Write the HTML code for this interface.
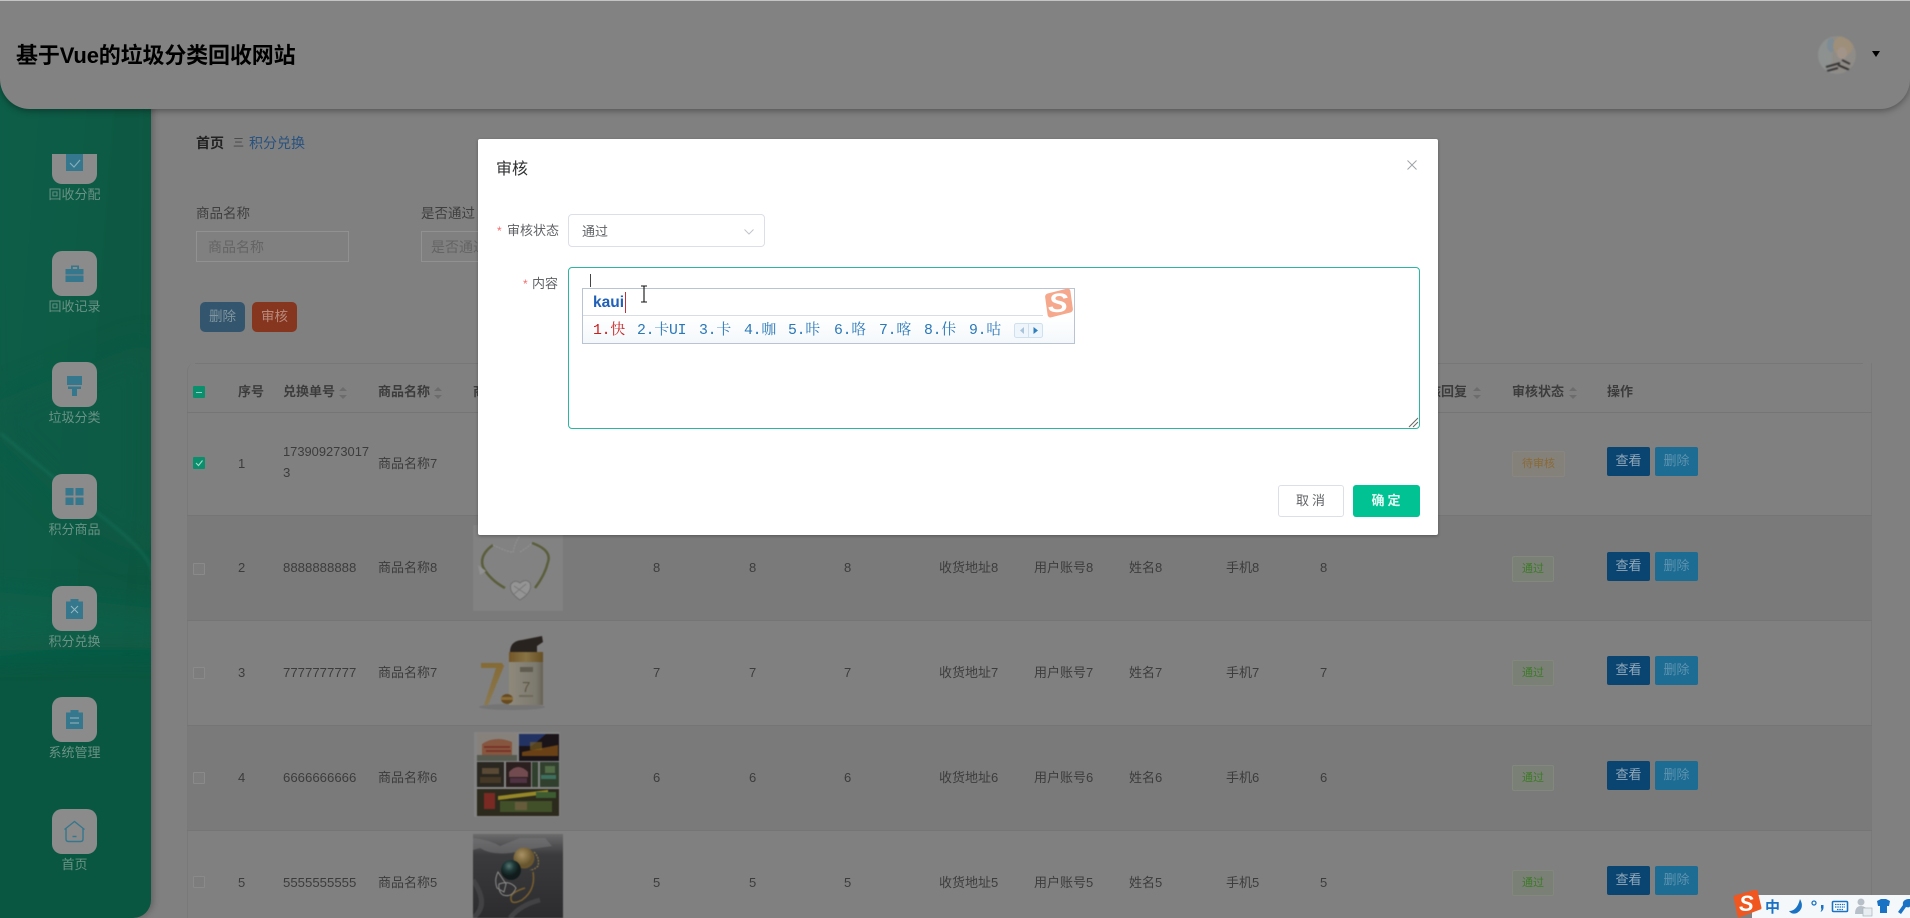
<!DOCTYPE html>
<html lang="zh-CN"><head><meta charset="utf-8"><title>基于Vue的垃圾分类回收网站</title>
<style>
html,body{margin:0;padding:0;width:1910px;height:918px;overflow:hidden;background:#808080}
body{position:relative;font-family:"Liberation Sans","Noto Sans CJK SC",sans-serif;color:#3c3c3c}
.a,.t{position:absolute}
.t{white-space:nowrap;font-size:13px;line-height:14px}
.b{font-weight:700;color:#3c3c3c}
.tile{position:absolute;left:52px;width:45px;height:45px;border-radius:10px;background:#8b8b8b}
.lb{position:absolute;left:0;width:149px;text-align:center;font-size:13px;line-height:14px;color:#6a9285}
.cb{position:absolute;left:193px;width:10px;height:10px;border:1px solid #8a8a8a;background:#7d7d7d;border-radius:1px}
.hl{position:absolute;left:187px;width:1685px;height:1px;background:#757575}
.s{position:absolute;top:387px;width:0;height:12px}
.s:before,.s:after{content:"";position:absolute;left:0;border-left:4px solid transparent;border-right:4px solid transparent}
.s:before{top:0;border-bottom:4px solid #6c6c6c}
.s:after{bottom:0;border-top:4px solid #6c6c6c}
.btn{position:absolute;width:43px;height:29px;line-height:27px;text-align:center;font-size:13px;border-radius:2px}
.v{left:1607px;background:#0a4572;color:#93a8b8}
.d{left:1655px;background:#1c6c94;color:#5f93ae}
.tag{position:absolute;left:1512px;height:24px;line-height:24px;width:40px;text-align:center;font-size:11px;color:#3d7a28;background:#7a8076;border:1px solid #82887e;border-radius:2px}
.c{position:absolute;top:323px;font-family:"Liberation Mono","Noto Serif CJK SC",serif;font-size:14.800px;line-height:17px;color:#2a78b8;white-space:nowrap;letter-spacing:-.2px}
</style></head><body>

<!-- sidebar -->
<div class="a" style="left:0;top:60px;width:151px;height:858px;background:#0a5741;border-bottom-right-radius:18px;overflow:hidden;box-shadow:2px 0 7px rgba(0,0,0,.25)">
<svg class="a" style="left:0;top:0" width="151" height="858" viewBox="0 60 151 858">
<defs><filter id="f" x="-30%" y="-30%" width="160%" height="160%"><feGaussianBlur stdDeviation="14"/></filter><filter id="g"><feGaussianBlur stdDeviation="1.6"/></filter>
<linearGradient id="lg" x1="0" x2="1" y1="0" y2=".25"><stop offset="0" stop-color="#0c5f49"/><stop offset="1" stop-color="#0a5741"/></linearGradient></defs>
<rect x="-20" y="40" width="190" height="610" fill="url(#lg)" filter="url(#f)"/>
<path d="M0 400L151 340V560L90 530L0 440Z" fill="#0c5c47" opacity=".6" filter="url(#f)"/>
<path d="M-20 590L170 610V650Q80 640 -20 660Z" fill="#0e624c" opacity=".7" filter="url(#f)"/>
<path d="M0 433Q60 483 110 523T151 580" stroke="#1f8068" stroke-width="2.500" fill="none" opacity=".4" filter="url(#g)"/>
</svg>
</div>
<div class="tile" style="top:154px;height:30px;border-radius:0 0 10px 10px"></div>
<div class="tile" style="top:251px"></div>
<div class="tile" style="top:362px"></div>
<div class="tile" style="top:474px"></div>
<div class="tile" style="top:586px"></div>
<div class="tile" style="top:697px"></div>
<div class="tile" style="top:809px"></div>
<svg class="a" style="left:0;top:0" width="151" height="918" fill="#35778d">
<path d="M66 154H83V171H66Z"/><path d="M70 163L74 167L80 160" stroke="#85aebb" stroke-width="1.200" fill="none"/>
<path d="M71 269V265.500H79V269H83.500V282H65.500V269ZM72.800 269H77.200V267H72.800Z"/><rect x="65" y="274.500" width="19" height="1" fill="#8b8b8b"/>
<path d="M67 376H82V385H67ZM68 386.500H81V389H77V396H72V389H68Z"/>
<path d="M65.500 488H73.500V495.500H65.500ZM75.500 488H83.500V495.500H75.500ZM65.500 497.500H73.500V505H65.500ZM75.500 497.500H83.500V505H75.500Z"/>
<path d="M66 601.500H70.500V599H78.500V601.500H83V619H66Z"/><path d="M71 606L78 613M78 606L71 613" stroke="#96b9c4" stroke-width="1"/>
<path d="M66 712.500H70.500V710H78.500V712.500H83V729H66Z"/><path d="M70 718H79M70 723H79" stroke="#9ab6c0" stroke-width="1"/>
<path d="M64.500 829.500L74.500 821.500L84.500 829.500M66 828.500V839Q66 841.500 68.500 841.500H80.500Q83 841.500 83 839V828.500M72.500 836.500H76.500" fill="none" stroke="#35778d" stroke-width="1.400"/>
</svg>
<div class="lb" style="top:188px">回收分配</div>
<div class="lb" style="top:300px">回收记录</div>
<div class="lb" style="top:411px">垃圾分类</div>
<div class="lb" style="top:523px">积分商品</div>
<div class="lb" style="top:635px">积分兑换</div>
<div class="lb" style="top:746px">系统管理</div>
<div class="lb" style="top:858px">首页</div>

<!-- header -->
<div class="a" style="left:0;top:0;width:1910px;height:109px;background:#828282;border-top:1px solid #c4c4c4;box-sizing:border-box;border-radius:0 0 30px 30px;box-shadow:0 2px 7px rgba(0,0,0,.35)">
<div class="a" style="left:16px;top:42px;font-size:22px;letter-spacing:-.15px;line-height:26px;font-weight:700;color:#000;white-space:nowrap">基于Vue的垃圾分类回收网站</div>
</div>
<svg class="a" style="left:1818px;top:36px;filter:blur(.7px)" width="38" height="38" viewBox="0 0 38 38">
<defs><clipPath id="av"><circle cx="19" cy="19" r="19"/></clipPath></defs>
<g clip-path="url(#av)"><rect width="38" height="38" fill="#8f8c88"/>
<rect x="0" width="14" height="38" fill="#8d918f"/><ellipse cx="13" cy="9" rx="4" ry="7" fill="#7d8c95"/>
<ellipse cx="25" cy="10" rx="10" ry="10" fill="#9d8f7a"/><ellipse cx="24" cy="17" rx="5" ry="6" fill="#a3948a"/>
<path d="M8 31L22 27M9 35L20 32M20 29L34 35M24 24L32 28" stroke="#2e2b2b" stroke-width="1.800"/></g></svg>
<div class="a" style="left:1872px;top:51px;border-left:4.500px solid transparent;border-right:4.500px solid transparent;border-top:6px solid #000"></div>

<!-- breadcrumb -->
<div class="t" style="left:233px;top:136px;font-size:11px;color:#444">三</div>
<div class="t" style="left:196px;top:136px;font-size:14px;font-weight:700;color:#222">首页</div>
<div class="t" style="left:249px;top:136px;font-size:14px;color:#27527f">积分兑换</div>

<!-- search -->
<div class="t" style="left:196px;top:207px;font-size:13.500px;color:#3f3f3f">商品名称</div>
<div class="a" style="left:196px;top:231px;width:151px;height:29px;border:1px solid #919191"></div>
<div class="t" style="left:208px;top:240px;font-size:14px;color:#646464">商品名称</div>
<div class="t" style="left:421px;top:207px;font-size:13.500px;color:#3f3f3f">是否通过</div>
<div class="a" style="left:421px;top:231px;width:151px;height:29px;border:1px solid #919191"></div>
<div class="t" style="left:431px;top:240px;font-size:14px;color:#646464">是否通过</div>
<div class="a" style="left:200px;top:302px;width:45px;height:30px;background:#33566e;border-radius:5px;color:#80959f;font-size:13.500px;line-height:29px;text-align:center">删除</div>
<div class="a" style="left:252px;top:302px;width:45px;height:30px;background:#86351f;border-radius:5px;color:#b88b7d;font-size:13.500px;line-height:30px;text-align:center">审核</div>

<!-- table -->
<div class="a" style="left:187px;top:363px;width:1685px;height:555px;border-left:1px solid #797979;border-right:1px solid #797979;box-sizing:border-box;border-radius:8px 0 0 0"></div>
<div class="a" style="left:195px;top:363px;width:1668px;height:1px;background:#777"></div>
<div class="a" style="left:188px;top:515px;width:1683px;height:105px;background:#7a7a7a"></div>
<div class="a" style="left:188px;top:725px;width:1683px;height:105px;background:#7a7a7a"></div>
<div class="hl" style="top:412px"></div><div class="hl" style="top:515px"></div><div class="hl" style="top:620px"></div><div class="hl" style="top:725px"></div><div class="hl" style="top:830px"></div>

<div class="cb" style="top:386px;background:#0a8f6c;border-color:#0a8f6c"></div><div class="a" style="left:196px;top:391.500px;width:6px;height:1.500px;background:#9cc"></div>
<div class="t b" style="left:238px;top:385px">序号</div>
<div class="t b" style="left:283px;top:385px">兑换单号</div><i class="s" style="left:339px"></i>
<div class="t b" style="left:378px;top:385px">商品名称</div><i class="s" style="left:434px"></i>
<div class="t b" style="left:473px;top:385px">商品图片</div>
<div class="t b" style="left:1415px;top:385px">审核回复</div><i class="s" style="left:1473px"></i>
<div class="t b" style="left:1512px;top:385px">审核状态</div><i class="s" style="left:1569px"></i>
<div class="t b" style="left:1607px;top:385px">操作</div>

<!-- rows -->
<div class="cb" style="top:457px;background:#0a8f6c;border-color:#0a8f6c"></div>
<svg class="a" style="left:193px;top:457px" width="12" height="12"><path d="M3 6L5.500 8.500L9.500 3.500" stroke="#a9d8ca" stroke-width="1.100" fill="none"/></svg>
<div class="cb" style="top:563px"></div><div class="cb" style="top:667px"></div><div class="cb" style="top:772px"></div><div class="cb" style="top:876px"></div>

<div class="t" style="left:238px;top:457px">1</div>
<div class="t" style="left:283px;top:445px;font-size:12.900px">173909273017</div>
<div class="t" style="left:283px;top:466px;font-size:13.200px">3</div>
<div class="t" style="left:378px;top:457px">商品名称7</div>

<div class="t" style="left:238px;top:561px">2</div><div class="t" style="left:283px;top:561px;font-size:13.200px">8888888888</div><div class="t" style="left:378px;top:561px">商品名称8</div>
<div class="t" style="left:653px;top:561px">8</div><div class="t" style="left:749px;top:561px">8</div><div class="t" style="left:844px;top:561px">8</div>
<div class="t" style="left:939px;top:561px">收货地址8</div><div class="t" style="left:1034px;top:561px">用户账号8</div><div class="t" style="left:1129px;top:561px">姓名8</div><div class="t" style="left:1226px;top:561px">手机8</div><div class="t" style="left:1320px;top:561px">8</div>

<div class="t" style="left:238px;top:666px">3</div><div class="t" style="left:283px;top:666px;font-size:13.200px">7777777777</div><div class="t" style="left:378px;top:666px">商品名称7</div>
<div class="t" style="left:653px;top:666px">7</div><div class="t" style="left:749px;top:666px">7</div><div class="t" style="left:844px;top:666px">7</div>
<div class="t" style="left:939px;top:666px">收货地址7</div><div class="t" style="left:1034px;top:666px">用户账号7</div><div class="t" style="left:1129px;top:666px">姓名7</div><div class="t" style="left:1226px;top:666px">手机7</div><div class="t" style="left:1320px;top:666px">7</div>

<div class="t" style="left:238px;top:771px">4</div><div class="t" style="left:283px;top:771px;font-size:13.200px">6666666666</div><div class="t" style="left:378px;top:771px">商品名称6</div>
<div class="t" style="left:653px;top:771px">6</div><div class="t" style="left:749px;top:771px">6</div><div class="t" style="left:844px;top:771px">6</div>
<div class="t" style="left:939px;top:771px">收货地址6</div><div class="t" style="left:1034px;top:771px">用户账号6</div><div class="t" style="left:1129px;top:771px">姓名6</div><div class="t" style="left:1226px;top:771px">手机6</div><div class="t" style="left:1320px;top:771px">6</div>

<div class="t" style="left:238px;top:876px">5</div><div class="t" style="left:283px;top:876px;font-size:13.200px">5555555555</div><div class="t" style="left:378px;top:876px">商品名称5</div>
<div class="t" style="left:653px;top:876px">5</div><div class="t" style="left:749px;top:876px">5</div><div class="t" style="left:844px;top:876px">5</div>
<div class="t" style="left:939px;top:876px">收货地址5</div><div class="t" style="left:1034px;top:876px">用户账号5</div><div class="t" style="left:1129px;top:876px">姓名5</div><div class="t" style="left:1226px;top:876px">手机5</div><div class="t" style="left:1320px;top:876px">5</div>

<!-- row images -->
<svg class="a" style="left:473px;top:525px;filter:blur(.6px)" width="90" height="393" viewBox="473 525 90 393">
<defs><linearGradient id="gb" x1="0" x2="1" y1="0" y2="0"><stop offset="0" stop-color="#8e897a"/><stop offset=".3" stop-color="#878377"/><stop offset=".8" stop-color="#7c796e"/><stop offset="1" stop-color="#676155"/></linearGradient>
<linearGradient id="gs" x1="0" x2="1" y1="0" y2="0"><stop offset="0" stop-color="#735528"/><stop offset=".5" stop-color="#877344"/><stop offset="1" stop-color="#654e24"/></linearGradient>
<linearGradient id="g7" x1="0" x2="0" y1="0" y2="1"><stop offset="0" stop-color="#856a35"/><stop offset="1" stop-color="#8a7850"/></linearGradient>
<linearGradient id="gr" x1="0" x2="0" y1="0" y2="1"><stop offset="0" stop-color="#6b6b6c"/><stop offset=".25" stop-color="#3b3b3d"/><stop offset="1" stop-color="#2c2c2e"/></linearGradient>
<radialGradient id="pg" cx=".4" cy=".35"><stop offset="0" stop-color="#a89264"/><stop offset="1" stop-color="#6a562e"/></radialGradient>
<radialGradient id="pd" cx=".4" cy=".3"><stop offset="0" stop-color="#5a7674"/><stop offset=".5" stop-color="#1f3b3a"/><stop offset="1" stop-color="#111b1b"/></radialGradient></defs>
<rect x="473" y="525" width="90" height="86" fill="#828282"/>
<path d="M493 545Q479 555 483 567Q490 580 505 588M532 543Q552 550 548 562Q545 575 535 588" fill="none" stroke="#5b5e3b" stroke-width="2.500"/>
<path d="M493 545Q510 553 513 552Q516 540 520 536M520 552Q527 548 532 543" fill="none" stroke="#909090" stroke-width="1.300" stroke-dasharray="2 1"/>
<path d="M520 600Q508 592 511 584Q515 579 520 583Q526 578 530 583Q533 592 520 600Z" fill="#949494" stroke="#6f6f6f"/>
<path d="M514 586L526 594M526 584L514 594" stroke="#787878"/>
<path d="M478 565L486 571L480 575Z" fill="#909090"/>
<!-- bottle -->
<ellipse cx="512" cy="707" rx="33" ry="3" fill="#707070" opacity=".8"/>
<path d="M481 663H502L504 666L488 705H484L496 668H481Z" fill="url(#g7)"/>
<rect x="509" y="652" width="34" height="10" fill="url(#gs)"/><rect x="509" y="662" width="34" height="43" fill="url(#gb)"/>
<path d="M510 652Q510 641 522 640L542 636L543 642L537 646V652Z" fill="#29231f"/>
<ellipse cx="507" cy="699" rx="6" ry="5" fill="#664a20"/><rect x="501" y="697" width="12" height="3" fill="#8a6c36"/>
<rect x="520" y="667" width="13" height="5" fill="#605c50"/><text x="522" y="692" font-size="15" fill="#5e5644" font-family="Liberation Sans">7</text><rect x="519" y="695" width="14" height="2" fill="#6e695c"/>
<!-- collage -->
<rect x="474" y="732" width="86" height="85" fill="#848484"/>
<rect x="477" y="733" width="40" height="28" fill="#87817c"/><path d="M482 755V744Q495 735 512 742V755Z" fill="#86563f"/><path d="M484 747H510M486 751H511" stroke="#752c23" stroke-width="1.500"/><rect x="477" y="755" width="40" height="6" fill="#55594e"/>
<rect x="519" y="734" width="40" height="27" fill="#1a1418"/><path d="M519 734H546L532 746H519Z" fill="#223263"/><path d="M522 752L558 745V756H522Z" fill="#6a4116"/><rect x="530" y="742" width="12" height="8" fill="#806220" opacity=".6"/>
<rect x="477" y="762" width="27" height="25" fill="#292720"/><rect x="482" y="768" width="17" height="6" fill="#5a4a35"/><rect x="480" y="777" width="21" height="6" fill="#463826"/>
<rect x="506" y="762" width="25" height="25" fill="#2b1f1f"/><path d="M509 772Q518 762 528 772V777H509Z" fill="#724b50"/><rect x="510" y="778" width="17" height="5" fill="#503342"/>
<rect x="532" y="762" width="27" height="25" fill="#31402e"/><rect x="538" y="762" width="2" height="25" fill="#848484"/><rect x="541" y="775" width="15" height="4" fill="#3e7060"/><rect x="545" y="766" width="10" height="7" fill="#506b46"/>
<rect x="477" y="789" width="82" height="27" fill="#2b2a1c"/><rect x="484" y="793" width="11" height="16" fill="#7a2a23"/><path d="M498 796L548 790V794L498 800Z" fill="#968728"/><rect x="500" y="801" width="52" height="11" fill="#42502a"/><rect x="515" y="802" width="12" height="8" fill="#665c3c"/><rect x="536" y="792" width="20" height="6" fill="#3d5c32"/>
<!-- ring -->
<rect x="473" y="834" width="90" height="84" fill="url(#gr)"/>
<path d="M473 838Q490 840 500 846L520 838H545L552 846L525 850Q495 858 480 848L473 850Z" fill="#757576" opacity=".6"/>
<path d="M473 880Q490 905 473 918M540 900Q520 905 510 918" stroke="#424244" stroke-width="5" fill="none"/>
<path d="M533 872Q536 890 522 900Q510 906 511 897Q512 892 525 888" fill="none" stroke="#7a5f2e" stroke-width="1.500"/>
<path d="M498 872L506 884L504 892L497 888Q494 880 498 872ZM499 884Q510 880 516 888Q512 898 503 895Q498 892 499 884Z" fill="none" stroke="#8c8c8c" stroke-width="1"/>
<circle cx="524" cy="858" r="10.500" fill="url(#pg)"/><circle cx="511" cy="870" r="10" fill="url(#pd)"/>
<path d="M534 852Q540 858 538 866Q534 870 530 870" fill="none" stroke="#877344" stroke-width="1.300" stroke-dasharray="2 1"/>
</svg>

<!-- tags & action buttons -->
<div class="tag" style="top:451px;width:51px;color:#8a6a35;background:#84807a;border-color:#8a867f">待审核</div>
<div class="tag" style="top:556px">通过</div><div class="tag" style="top:660px">通过</div><div class="tag" style="top:765px">通过</div><div class="tag" style="top:870px">通过</div>
<div class="btn v" style="top:447px">查看</div><div class="btn d" style="top:447px">删除</div>
<div class="btn v" style="top:552px">查看</div><div class="btn d" style="top:552px">删除</div>
<div class="btn v" style="top:656px">查看</div><div class="btn d" style="top:656px">删除</div>
<div class="btn v" style="top:761px">查看</div><div class="btn d" style="top:761px">删除</div>
<div class="btn v" style="top:866px">查看</div><div class="btn d" style="top:866px">删除</div>

<!-- dialog -->
<div class="a" style="left:478px;top:139px;width:960px;height:396px;background:#fff;border-radius:2px;box-shadow:0 1px 3px rgba(0,0,0,.3)"></div>
<div class="t" style="left:496px;top:161px;font-size:16px;line-height:18px;color:#303133">审核</div>
<svg class="a" style="left:1407px;top:160px" width="10" height="10"><path d="M.5.5L9.500 9.500M9.500.5L.5 9.500" stroke="#a0a3a8" stroke-width="1"/></svg>
<div class="t" style="left:497px;top:224px;color:#f56c6c;font-size:12px">*</div>
<div class="t" style="left:507px;top:224px;color:#606266">审核状态</div>
<div class="a" style="left:568px;top:214px;width:195px;height:31px;border:1px solid #dcdfe6;border-radius:4px"></div>
<div class="t" style="left:582px;top:225px;color:#606266">通过</div>
<svg class="a" style="left:744px;top:229px" width="10" height="6"><path d="M.5.5L5 5L9.500.5" fill="none" stroke="#c0c4cc" stroke-width="1"/></svg>
<div class="t" style="left:523px;top:277px;color:#f56c6c;font-size:12px">*</div>
<div class="t" style="left:532px;top:277px;color:#606266">内容</div>
<div class="a" style="left:568px;top:267px;width:850px;height:160px;border:1px solid #2cb5a0;border-radius:4px"></div>
<div class="a" style="left:590px;top:274px;width:1px;height:13px;background:#444"></div>
<svg class="a" style="left:1408px;top:417px" width="11" height="11"><path d="M1 10L10 1M5 10L10 5" stroke="#666" stroke-width="1"/></svg>

<!-- IME -->
<div class="a" style="left:582px;top:288px;width:491px;height:54px;background:linear-gradient(#fff 50%,#f4f8fb);border:1px solid #b9c4d2"></div>
<div class="a" style="left:583px;top:315px;width:460px;height:1px;background:#d8dde4"></div>
<div class="t" style="left:593px;top:294px;font-size:15.500px;line-height:17px;font-weight:700;color:#2060b8">kaui</div>
<div class="a" style="left:625px;top:292px;width:1px;height:21px;background:#b9343c"></div>
<svg class="a" style="left:639px;top:285px" width="10" height="18"><path d="M2 1H8M5 1V17M2 17H8" stroke="#111" stroke-width="1.100" fill="none"/></svg>
<div class="c" style="left:593px;color:#c81e1e">1.快</div>
<div class="c" style="left:637px">2.卡UI</div>
<div class="c" style="left:699px">3.卡</div>
<div class="c" style="left:744px">4.咖</div>
<div class="c" style="left:788px">5.咔</div>
<div class="c" style="left:834px">6.咯</div>
<div class="c" style="left:879px">7.喀</div>
<div class="c" style="left:924px">8.佧</div>
<div class="c" style="left:969px">9.咕</div>
<svg class="a" style="left:1014px;top:323px" width="29" height="15"><rect x=".5" y=".5" width="28" height="14" rx="2" fill="#eef5fb" stroke="#cfe0ef"/><path d="M14.500 1V14" stroke="#cfe0ef"/><path d="M10 4L6 7.500L10 11Z" fill="#a9c3da"/><path d="M19.500 4L24 7.500L19.500 11Z" fill="#2f7fbf"/></svg>
<div class="a" style="left:1046px;top:291px;width:26px;height:24px;background:#f5a88c;border-radius:3px;transform:rotate(-14deg) skewX(-6deg)"></div>
<div class="t" style="left:1049px;top:289px;font-size:27px;line-height:28px;font-weight:700;font-style:italic;color:#fff;transform:scaleX(1.1)">S</div>

<div class="a" style="left:1278px;top:485px;width:64px;height:30px;border:1px solid #dcdfe6;border-radius:3px;text-align:center;line-height:30px;font-size:13px;letter-spacing:3px;color:#606266;text-indent:2px">取消</div>
<div class="a" style="left:1353px;top:485px;width:67px;height:32px;background:#00c292;border-radius:3px;text-align:center;line-height:32px;font-size:13px;font-weight:700;letter-spacing:3px;color:#e6fbf5;text-indent:2px">确定</div>

<!-- IME tray -->
<div class="a" style="left:1752px;top:895px;width:158px;height:23px;background:#f5f8fb"></div>
<svg class="a" style="left:1732px;top:890px" width="178" height="28" viewBox="1732 890 178 28">
<path d="M1735 897L1756 891L1760 908L1739 916Z" fill="#f0561f" stroke="#f0561f" stroke-width="3" stroke-linejoin="round"/>
<text x="1739" y="911" font-family="Liberation Sans" font-size="22" font-weight="700" font-style="italic" fill="#fff">S</text>
<text x="1765" y="912" font-family="Liberation Sans,Noto Sans CJK SC" font-size="15" font-weight="700" fill="#1a72c4">中</text>
<path d="M1800 899Q1805 908 1797 913Q1792 915 1789 911Q1797 911 1800 899Z" fill="#1a72c4"/>
<circle cx="1814" cy="903" r="2" fill="none" stroke="#1a72c4" stroke-width="1.300"/>
<path d="M1821 905H1823.500V908Q1823 911 1820.500 912Q1822 909 1821 908Z" fill="#1a72c4"/>
<rect x="1832.500" y="901.500" width="15" height="10" rx="1" fill="#fff" stroke="#1a72c4" stroke-width="1.600"/><path d="M1835 904.500H1845M1835 907H1845M1837 909.500H1843" stroke="#1a72c4" stroke-width="1.200" stroke-dasharray="1.500 .8"/>
<circle cx="1861" cy="902" r="3.500" fill="#b7c0c8"/><path d="M1855 914Q1855 906 1861 906Q1866 906 1867 911V914Z" fill="#b7c0c8"/><rect x="1863" y="908" width="9" height="8" fill="#e8edf1" stroke="#aab4bd" stroke-width=".7"/>
<path d="M1877 901L1881 899H1886L1890 901L1889 906H1887V913H1880V906H1878Z" fill="#1a72c4"/>
<path d="M1908 899Q1902 900 1903 905L1898 912L1901 914L1906 907Q1910 908 1910 906V899Z" fill="#1a72c4"/>
</svg>
</body></html>
